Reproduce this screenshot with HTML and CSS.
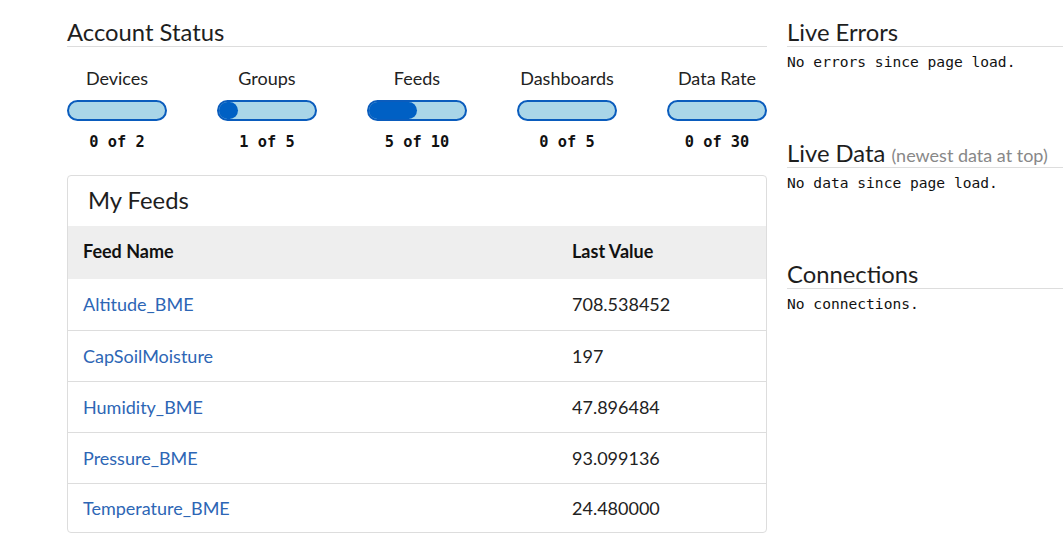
FILE: index.html
```html
<!DOCTYPE html>
<html>
<head>
<meta charset="utf-8">
<link rel="stylesheet" href="styles.css">
</head>
<body>
<div class="page">
  <div class="main">
    <h2 class="heading">Account Status</h2>
    <div class="stats">
      <div class="stat">
        <div class="stat-label">Devices</div>
        <div class="bar"><div class="fill" style="width:0%"></div></div>
        <div class="stat-count">0 of 2</div>
      </div>
      <div class="stat">
        <div class="stat-label">Groups</div>
        <div class="bar"><div class="fill" style="width:20%"></div></div>
        <div class="stat-count">1 of 5</div>
      </div>
      <div class="stat">
        <div class="stat-label">Feeds</div>
        <div class="bar"><div class="fill" style="width:50%"></div></div>
        <div class="stat-count">5 of 10</div>
      </div>
      <div class="stat">
        <div class="stat-label">Dashboards</div>
        <div class="bar"><div class="fill" style="width:0%"></div></div>
        <div class="stat-count">0 of 5</div>
      </div>
      <div class="stat">
        <div class="stat-label">Data Rate</div>
        <div class="bar"><div class="fill" style="width:0%"></div></div>
        <div class="stat-count">0 of 30</div>
      </div>
    </div>
    <div class="card">
      <div class="card-title">My Feeds</div>
      <table class="feeds">
        <thead>
          <tr><th class="col-name">Feed Name</th><th>Last Value</th></tr>
        </thead>
        <tbody>
          <tr><td><a href="#">Altitude_BME</a></td><td>708.538452</td></tr>
          <tr><td><a href="#">CapSoilMoisture</a></td><td>197</td></tr>
          <tr><td><a href="#">Humidity_BME</a></td><td>47.896484</td></tr>
          <tr><td><a href="#">Pressure_BME</a></td><td>93.099136</td></tr>
          <tr class="last"><td><a href="#">Temperature_BME</a></td><td>24.480000</td></tr>
        </tbody>
      </table>
    </div>
  </div>
  <div class="side">
    <section class="side-section">
      <h2 class="heading">Live Errors</h2>
      <div class="mono">No errors since page load.</div>
    </section>
    <section class="side-section">
      <h2 class="heading">Live Data <span class="sub">(newest data at top)</span></h2>
      <div class="mono">No data since page load.</div>
    </section>
    <section class="side-section">
      <h2 class="heading">Connections</h2>
      <div class="mono">No connections.</div>
    </section>
  </div>
</div>
</body>
</html>
```
FILE: styles.css
```css
* { box-sizing: border-box; }
html, body { margin: 0; padding: 0; background: #fff; overflow: hidden; }
body {
  font-family: Lato, "Open Sans", sans-serif;
  color: #222;
}
.page {
  display: flex;
  gap: 20px;
  padding: 20px 0 0 67px;
  width: 1100px;
}
.main { width: 700px; flex: none; }
.side { flex: 1; }
.heading {
  margin: 0;
  font-weight: 400;
  font-size: 23.8px;
  line-height: 24px;
  height: 27px;
  padding-bottom: 2px;
  color: #1e1e1e;
  border-bottom: 1px solid #ddd;
  white-space: nowrap;
}
.stats {
  display: flex;
  justify-content: space-between;
  padding-top: 21px;
}
.stat { width: 100px; text-align: center; }
.stat-label { font-size: 18px; line-height: 20px; color: #222; white-space: nowrap; margin: 0 -20px 0; padding-bottom: 1px; }
.bar {
  margin-top: 11px;
  height: 21px;
  border: 2px solid #0a5cbd;
  border-radius: 11px;
  background: #aad6e8;
  overflow: hidden;
}
.fill { height: 100%; background: #0060c4; border-radius: 0 9px 9px 0; }
.stat-count {
  margin-top: 12px;
  font-family: "DejaVu Sans Mono", monospace;
  font-weight: 700;
  font-size: 15.3px;
  line-height: 18px;
  color: #111;
  white-space: nowrap;
}
.card {
  margin-top: 24px;
  border: 1px solid #ddd;
  border-radius: 4px;
  overflow: hidden;
}
.card-title {
  font-size: 23.8px;
  line-height: 48px;
  padding-bottom: 2px;
  padding-left: 20px;
  color: #1e1e1e;
}
.feeds { width: 100%; border-collapse: collapse; }
.feeds th {
  background: #eee;
  text-align: left;
  font-weight: 700;
  font-size: 18px;
  height: 53px;
  padding: 0 15px 3px;
  color: #111;
}
.feeds .col-name { width: 489px; }
.feeds td {
  height: 51px;
  padding: 0 15px;
  font-size: 18px;
  border-top: 1px solid #ddd;
  color: #222;
}
.feeds tbody tr:first-child td { border-top: none; }
.feeds tr.last td { height: 49px; }
.feeds a { color: #2d66b5; text-decoration: none; }
.side-section { height: 121px; }
.sub { font-size: 18px; line-height: 1; color: #888; }
.mono {
  font-family: "DejaVu Sans Mono", monospace;
  font-size: 14.6px;
  line-height: 18px;
  padding-top: 6px;
  color: #111;
}
```
